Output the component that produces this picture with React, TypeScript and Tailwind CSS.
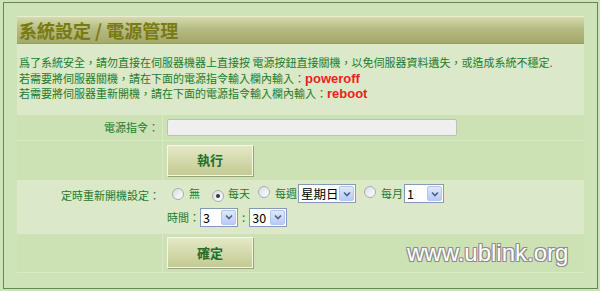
const cjk = "font-['Noto_Sans_CJK_TC','Noto_Sans',sans-serif]";

function Radio({ checked }: { checked?: boolean }) {
  return (
    <span className="inline-flex h-[12px] w-[12px] items-center justify-center rounded-full border border-[#a4aeb6] bg-gradient-to-br from-[#d8dde2] to-white">
      {checked && <span className="h-[4px] w-[4px] rounded-full bg-[#2f3a2f]" />}
    </span>
  );
}

function Select({ value, width }: { value: string; width: string }) {
  return (
    <span className={`inline-flex h-[19px] items-center border border-[#7f9db9] bg-white ${width}`}>
      <span className={`flex-1 whitespace-nowrap pl-[2px] text-[12.5px] leading-[17px] text-black ${cjk}`}>{value}</span>
      <span className="mr-[1px] flex h-[15px] w-[15px] shrink-0 items-center justify-center rounded-[2px] border border-[#b4c6ee] bg-gradient-to-b from-[#dfe8fd] to-[#b8cbf6]">
        <svg width="8" height="6" viewBox="0 0 8 6">
          <path d="M1 1.5 L4 4.5 L7 1.5" fill="none" stroke="#4d6185" strokeWidth="1.6" />
        </svg>
      </span>
    </span>
  );
}

function Button({ label }: { label: string }) {
  return (
    <button className="h-[31px] w-[86px] border border-[#f4f6e6] bg-gradient-to-b from-[#e4e9c6] to-[#c3ca92] shadow-[1px_1px_0_#9aa27a]">
      <span className={`text-[13px] font-bold text-[#1f6e2a] ${cjk}`}>{label}</span>
    </button>
  );
}

export default function App() {
  return (
    <div className={`relative h-[291px] w-[600px] bg-[#cfe3b9] pl-[3px] pt-[2px] ${cjk}`}>
      <div className="h-[287px] w-[595px] border border-[#5f8a52] px-[13px] pt-[13px]">
        {/* Title bar */}
        <div className="flex h-[28px] items-center border-t border-t-[#e9eed3] border-b border-b-[#939d5e] bg-gradient-to-b from-[#d5daac] via-[#b4b97f] to-[#a3a86b] pl-[2px]">
          <h1 className="text-[18px] font-bold leading-none text-[#7a7a12]">系統設定 / 電源管理</h1>
        </div>

        {/* Panel */}
        <div className="h-[229px] bg-[#dbe9c8]">
          <div className="px-[2px] pt-[11px] text-[11px] leading-[15.5px] text-[#237a2c]">
            <p>爲了系統安全，請勿直接在伺服器機器上直接按 電源按鈕直接關機，以免伺服器資料遺失，或造成系統不穩定.</p>
            <p>
              若需要將伺服器關機，請在下面的電源指令輸入欄內輸入：
              <span className="font-['Liberation_Sans',sans-serif] text-[13px] font-bold text-[#ee1c1c]">poweroff</span>
            </p>
            <p>
              若需要將伺服器重新開機，請在下面的電源指令輸入欄內輸入：
              <span className="font-['Liberation_Sans',sans-serif] text-[13px] font-bold text-[#ee1c1c]">reboot</span>
            </p>
          </div>

          <div className="mt-[13px] text-[11px] text-[#237a2c]">
            {/* Row 1 */}
            <div className="flex h-[26px] border-b border-[#d9e8c5] bg-[#cce1b4]">
              <div className="flex w-[146px] items-center justify-end border-r border-[#d9e8c5] pr-[3px]">電源指令：</div>
              <div className="flex flex-1 items-center pl-[4px]">
                <div className="h-[17px] w-[290px] rounded-[2px] border border-[#b9c2b4] bg-[#efefef]" />
              </div>
            </div>
            {/* Row 2 */}
            <div className="flex h-[39px] bg-[#cce1b4]">
              <div className="w-[146px] border-r border-[#d9e8c5]" />
              <div className="flex flex-1 items-center pl-[4px]">
                <Button label="執行" />
              </div>
            </div>
            {/* Row 3 + 4 */}
            <div className="flex h-[54px]">
              <div className="w-[146px] pt-[7px] pr-[3px] text-right">定時重新開機設定：</div>
              <div className="flex-1 pl-[9px]">
                <div className="flex h-[28px] items-center whitespace-nowrap">
                  <Radio />
                  <span className="ml-[5px]">無</span>
                  <span className="ml-[12px]"><Radio checked /></span>
                  <span className="ml-[4px]">每天</span>
                  <span className="ml-[8px]"><Radio /></span>
                  <span className="ml-[5px]">每週</span>
                  <span className="ml-[1px]"><Select value="星期日" width="w-[58px]" /></span>
                  <span className="ml-[8px]"><Radio /></span>
                  <span className="ml-[5px]">每月</span>
                  <span className="ml-[1px]"><Select value="1" width="w-[40px]" /></span>
                </div>
                <div className="-ml-[5px] flex items-center">
                  <span>時間：</span>
                  <Select value="3" width="w-[38px]" />
                  <span className="mx-[4px] text-[12px]">:</span>
                  <Select value="30" width="w-[38px]" />
                </div>
              </div>
            </div>
            {/* Row 5 */}
            <div className="flex h-[38px] bg-[#cce1b4]">
              <div className="w-[146px] border-r border-[#d9e8c5]" />
              <div className="flex flex-1 items-center pl-[4px]">
                <Button label="確定" />
              </div>
            </div>
          </div>
        </div>
      </div>

      {/* watermark */}
      <div className="absolute left-[407px] top-[241px] font-['Liberation_Sans',sans-serif] text-[24px] leading-none text-white [text-shadow:-1px_-1px_0_#8c8c8c,1px_-1px_0_#8c8c8c,-1px_1px_0_#8c8c8c,1px_1px_0_#8c8c8c]">
        www.ublink.org
      </div>
    </div>
  );
}
